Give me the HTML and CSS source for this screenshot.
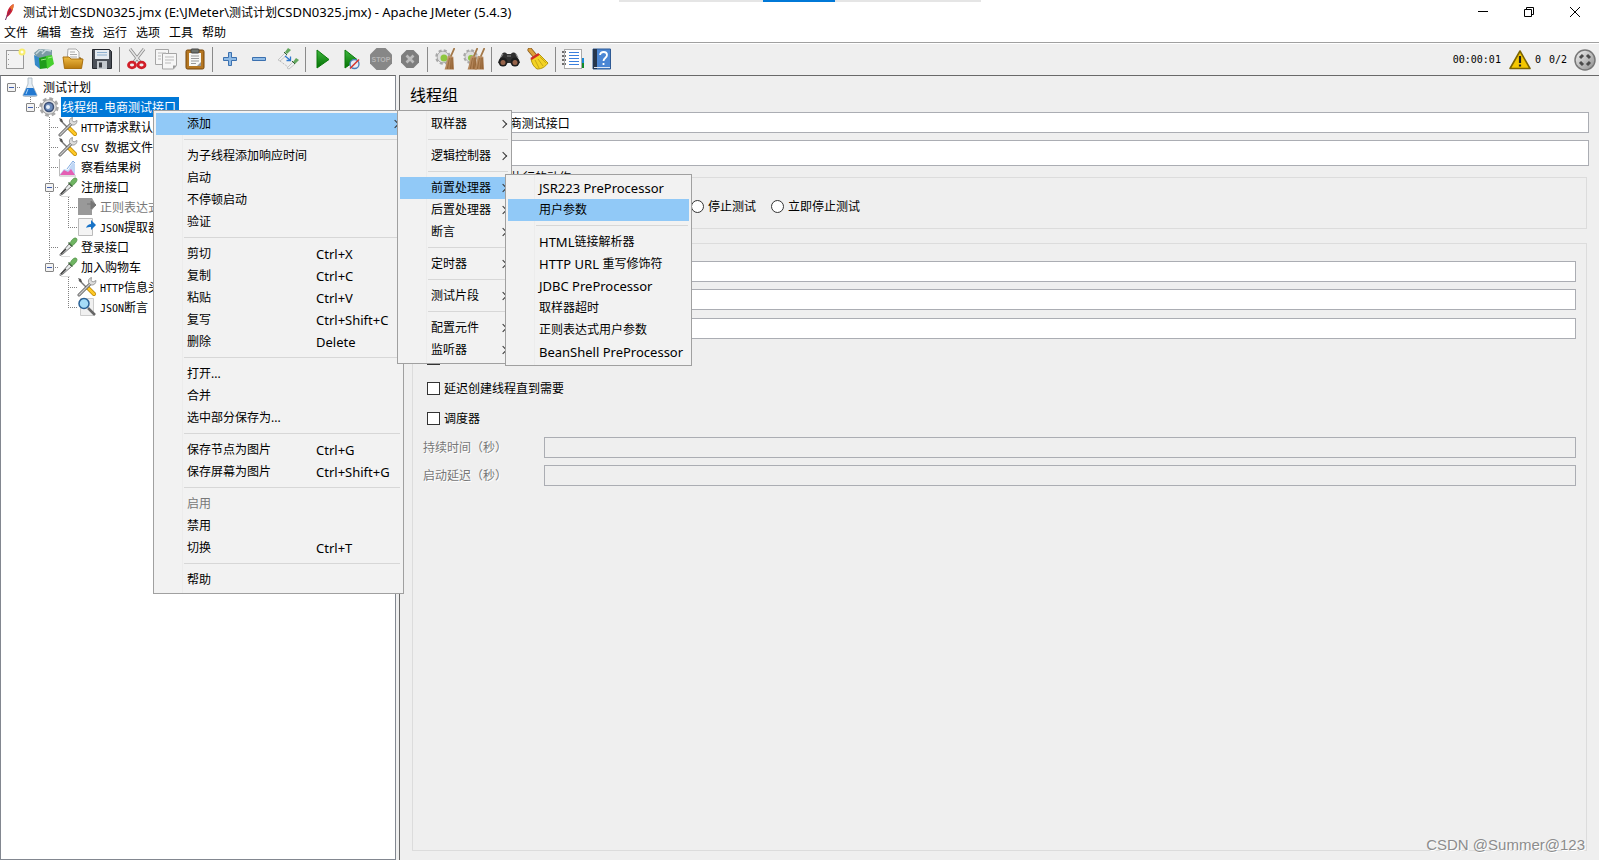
FILE: index.html
```html
<!DOCTYPE html>
<html lang="zh-CN">
<head>
<meta charset="utf-8">
<title>Apache JMeter (5.4.3)</title>
<link rel="stylesheet" href="styles.css">
</head>
<body>
<svg class="defs" aria-hidden="true">
  <defs>
    <linearGradient id="metal" x1="0" y1="0" x2="1" y2="1"><stop offset="0" stop-color="#f4f4f4"/><stop offset="1" stop-color="#8c8c8c"/></linearGradient>
    <linearGradient id="green" x1="0" y1="0" x2="0" y2="1"><stop offset="0" stop-color="#3fb83f"/><stop offset="1" stop-color="#037003"/></linearGradient>
    <linearGradient id="gold" x1="0" y1="0" x2="0" y2="1"><stop offset="0" stop-color="#f0bc45"/><stop offset="1" stop-color="#b97a0c"/></linearGradient>
    <linearGradient id="straw" x1="0" y1="0" x2="1" y2="1"><stop offset="0" stop-color="#c9a27a"/><stop offset="1" stop-color="#a06c3c"/></linearGradient>
    <symbol id="tools" viewBox="0 0 20 20">
      <path d="M2 3l8 8" stroke="#777" stroke-width="1.4"/><path d="M1 1l3 1 1 3-2 0z" fill="#555"/>
      <path d="M11 11l6 6" stroke="#b98500" stroke-width="4" stroke-linecap="round"/><path d="M11 11l6 6" stroke="#ffc928" stroke-width="2.6" stroke-linecap="round"/>
      <path d="M2 18L13 7" stroke="#555" stroke-width="3" stroke-linecap="round"/><path d="M2 18L13 7" stroke="#c9c9c9" stroke-width="1.5" stroke-linecap="round"/>
      <path d="M11.5 5.5c-.5-2 .5-4.500 3-5l-.5 3 2 1.500 3-1.500c0 3-2 5-5 4.500z" fill="#ddd" stroke="#888" stroke-width=".8"/>
    </symbol>
    <symbol id="dropper" viewBox="0 0 20 20">
      <path d="M2 17.500L11 7l2.500 2.500L5 17l-3 1.500z" fill="#e9ecec" stroke="#777" stroke-width="1"/>
      <path d="M3 17l5-5" stroke="#444" stroke-width="1.5"/>
      <path d="M10.500 5.500l4 4" stroke="#456b40" stroke-width="1.600"/>
      <path d="M12 6.500c1-3 3.500-6 6-5.500 2.500 1.500 0 5-3.500 7.500z" fill="#6fb562" stroke="#4c8b42" stroke-width=".7"/>
      <path d="M3 19.500h9" stroke="#ddd"/>
    </symbol>
    <symbol id="broom" viewBox="0 0 10 20">
      <path d="M9.500 0L6 8" stroke="#a37848" stroke-width="1.600"/>
      <path d="M3.500 7l5 1 .5 11.500H.5C2 16 2.500 11 3.500 7z" fill="url(#straw)"/><path d="M5 9l-2 10M6.500 9l-.5 10M7.500 9v10" stroke="#805022" stroke-width=".5"/>
    </symbol>
    <symbol id="gear" viewBox="0 0 20 20">
      <circle cx="10" cy="10" r="8" stroke="#a8a8a8" stroke-width="3.400" stroke-dasharray="3.600 2.680"/>
      <circle cx="10" cy="10" r="7.300" fill="#dedede" stroke="#a0a0a0"/>
    </symbol>
  </defs>
</svg>

<div class="window">
  <div class="capture-bar"><span></span></div>
  <header class="titlebar">
    <svg class="feather" viewBox="0 0 10 18"><path d="M1.500 17L4 10" stroke="#6a2a60"/><path d="M3 14C2 9 5 3 9.500 1 10 6 7 12 3 14z" fill="#c92136"/><path d="M6 4C7.500 2.500 8.500 1.500 9.500 1 10 3 9 6 8 8z" fill="#e9752d"/><path d="M3 13l4-7" stroke="#812163" stroke-width=".8"/></svg>
    <h1>测试计划<span class="latin">CSDN0325.jmx (E:\JMeter\</span>测试计划<span class="latin">CSDN0325.jmx) - Apache JMeter (5.4.3)</span></h1>
    <div class="controls">
      <button aria-label="最小化"><svg viewBox="0 0 12 12"><path d="M1 5.500h10" stroke="#000"/></svg></button>
      <button aria-label="还原"><svg viewBox="0 0 12 12" stroke="#000"><path d="M1.500 3.500h7v7h-7zM3.500 3V1.500h7v7H9"/></svg></button>
      <button aria-label="关闭"><svg viewBox="0 0 12 12"><path d="M1 1l10 10M11 1L1 11" stroke="#000"/></svg></button>
    </div>
  </header>

  <nav class="menubar">
    <button>文件</button><button>编辑</button><button>查找</button><button>运行</button><button>选项</button><button>工具</button><button>帮助</button>
  </nav>

  <div class="toolbar">
    <button aria-label="新建"><svg viewBox="0 0 22 22"><rect x="2.500" y="2.500" width="17" height="18" fill="#f3f3f3" stroke="#999"/><path d="M4.500 6v1M4.500 11v1M4.500 16v1" stroke="#999"/><circle cx="18" cy="4" r="3.500" fill="#f7ec6c"/><circle cx="18" cy="4" r="1.500" fill="#fffef0"/></svg></button>
    <button aria-label="模板"><svg viewBox="0 0 22 22"><path d="M1 5l5-4 13 1v6l-14 4z" fill="#7b9aa5"/><path d="M3 6l4-4 3 1M9 6l4-4 5 1" stroke="#c7d8de" stroke-width="1.500"/><path d="M1 7l6 3v11l-5-4z" fill="#3489c9"/><path d="M6 10l8-2 1 12-8 1z" fill="#1f9c1a"/><path d="M13 8l6-1 2 9-7 5z" fill="#46cf2e"/><path d="M8 12l5-1M15 10l4-1" stroke="#a0ee86"/></svg></button>
    <button aria-label="打开"><svg viewBox="0 0 22 22"><path d="M2 11l4-2h12l2 2v4H2z" fill="#8d6318"/><path d="M6 1h8l3 3v9H5z" fill="#fafafa" stroke="#aaa"/><path d="M8 4h5M8 6.500h7M8 9h7" stroke="#aaa"/><path d="M1 9h6l2 2h12l-1.500 9.500h-17z" fill="url(#gold)" stroke="#a87012"/></svg></button>
    <button aria-label="保存"><svg viewBox="0 0 22 22"><path d="M1.500 1.500h17l2 2v17h-19z" fill="#4b5058" stroke="#25282e"/><rect x="4" y="2" width="14" height="9" fill="#e5ebf1"/><path d="M6 4.500h10M6 7h10" stroke="#8eb0d0"/><rect x="6" y="13" width="10" height="8" fill="#c4c9ce"/><rect x="8" y="14.500" width="3" height="5" fill="#3a3e45"/></svg></button>
    <i></i>
    <button aria-label="剪切"><svg viewBox="0 0 22 22"><path d="M4 1l10 13M18 1L8 14" stroke="#888" stroke-width="3"/><path d="M4 1l10 13M18 1L8 14" stroke="#e4e4e4" stroke-width="1.600"/><ellipse cx="6" cy="17" rx="3.500" ry="2.800" stroke="#d11e28" stroke-width="2.800"/><ellipse cx="15.500" cy="17" rx="3.500" ry="2.800" stroke="#d11e28" stroke-width="2.800"/></svg></button>
    <button aria-label="复制"><svg viewBox="0 0 22 22"><g fill="#f6f6f6" stroke="#a5a5a5"><path d="M.5 1.500h13v15H.5z"/><path d="M7.500 5.500h14v12l-3 3.500h-11z"/></g><path d="M3 5h8M3 8h3M3 11h3M10 9h9M10 12h9M10 15h6" stroke="#bbb"/><path d="M18 21v-3.500h3.500z" fill="#999"/></svg></button>
    <button aria-label="粘贴"><svg viewBox="0 0 22 22"><rect x="2" y="2" width="18" height="19" rx="1.500" fill="#b57722" stroke="#754508"/><path d="M5 5h12v13H5z" fill="#f7f7f4"/><rect x="7" y="1" width="8" height="4" rx="1" fill="#6f736b" stroke="#444"/><path d="M7 8h8M7 10.500h8M7 13h8M7 15.500h5" stroke="#999"/><path d="M13 18h4v-4z" fill="#999"/></svg></button>
    <i></i>
    <button aria-label="展开"><svg viewBox="0 0 22 22"><path d="M9.500 4.500h3v5h5v3h-5v5h-3v-5h-5v-3h5z" fill="#8fbbe6" stroke="#3b70af"/></svg></button>
    <button aria-label="折叠"><svg viewBox="0 0 22 22"><path d="M4.500 9.500h13v3h-13z" fill="#8fbbe6" stroke="#3b70af"/></svg></button>
    <button aria-label="切换"><svg viewBox="0 0 22 22"><path d="M1 12l7-7 2 2-7 6zM10 20l6-6 2 2-6 5z" fill="#eef0f0" stroke="#bbb" stroke-width=".8"/><path d="M8 4l3-4 3 2-4 4zM16 14l3-4 3 2-4 4z" fill="#62a65d"/><path d="M7 4l3 3M15 13l3 3" stroke="#345e34"/><path d="M8 8l5 4M13.500 8.500V12.500H9.500" stroke="#2d78cf" stroke-width="1.300"/><path d="M3 13l8 6" stroke="#aaa" stroke-dasharray="1 1"/></svg></button>
    <i></i>
    <button aria-label="启动"><svg viewBox="0 0 22 22"><path d="M5 2l12 9.500L5 20z" fill="url(#green)" stroke="#0a7a0a"/></svg></button>
    <button aria-label="不停顿启动"><svg viewBox="0 0 22 22"><path d="M4 2l12 9.500L4 20z" fill="url(#green)" stroke="#0a7a0a"/><circle cx="13.500" cy="16" r="4.500" fill="#e8eef6" stroke="#4b7fb9" stroke-width="1.300"/><path d="M9 20.500l9-9" stroke="#d83830" stroke-width="1.600"/></svg></button>
    <button aria-label="停止" disabled><svg viewBox="0 0 22 22"><path d="M6.500 0h9L22 6.500v9L15.500 22h-9L0 15.500v-9z" fill="#878787"/><text x="11" y="14" text-anchor="middle" class="stop-text">STOP</text></svg></button>
    <button aria-label="关闭" disabled><svg viewBox="0 0 22 22"><path d="M7.500 2h7L20 7.500v7L14.500 20h-7L2 14.500v-7z" fill="#7e7e7e"/><path d="M7.500 7.500l7 7M14.500 7.500l-7 7" stroke="#bcbcbc" stroke-width="2.600"/></svg></button>
    <i></i>
    <button aria-label="清除"><svg viewBox="0 0 22 22"><use href="#gear" x="1" y="1" width="16" height="16"/><circle cx="10" cy="10" r="3.500" fill="#8ec63f"/><use href="#broom" x="10" y="0" width="11" height="22"/></svg></button>
    <button aria-label="清除全部"><svg viewBox="0 0 22 22"><use href="#gear" x="0" y="1" width="15" height="15"/><circle cx="8" cy="10" r="3" fill="#8ec63f"/><use href="#broom" x="4" y="0" width="11" height="22"/><use href="#broom" x="11" y="0" width="11" height="22"/></svg></button>
    <i></i>
    <button aria-label="查找"><svg viewBox="0 0 22 22"><path d="M4 6c1-2 4-2 5 0h4c1-2 4-2 5 0l4 9H0z" fill="#303030"/><path d="M3 9l2-3M18 6l2 4M9 8h4" stroke="#898989" stroke-width="1.200"/><circle cx="5" cy="14" r="4.500" fill="#1d1d1d"/><circle cx="17" cy="14" r="4.500" fill="#1d1d1d"/><circle cx="5" cy="14.500" r="2.500" fill="#97644b"/><circle cx="17" cy="14.500" r="2.500" fill="#97644b"/></svg></button>
    <button aria-label="重置查找"><svg viewBox="0 0 22 22"><path d="M3 2l5 6" stroke="#8b5c1b" stroke-width="5" stroke-linecap="round"/><path d="M3 2l5 6" stroke="#dc9f3c" stroke-width="3.400" stroke-linecap="round"/><path d="M4 11l8-5 9 9c-3 4-6 6-11 6-3-2-5-5-6-10z" fill="#f3d324" stroke="#b49710"/><path d="M8 12l4 8M11 11l5 7M13 9l6 6" stroke="#c8a616"/><path d="M4 11l8-5" stroke="#d12c24" stroke-width="2.500"/></svg></button>
    <i></i>
    <button aria-label="函数助手"><svg viewBox="0 0 22 22"><rect x="2.500" y="1.500" width="17" height="19" fill="#fff" stroke="#aaa"/><path d="M0 4h4M0 8h4M0 12h4M0 16h4" stroke="#444" stroke-width="1.500" stroke-dasharray="2 1"/><path d="M7 4.500h10M7 7.500h10M7 10.500h10M7 13.500h10M7 16.500h10" stroke="#3b80dd" stroke-width="1.200"/><path d="M20 10h2v5h-2z" fill="#1688d7"/><path d="M20 15h2v5h-2z" fill="#128a28"/></svg></button>
    <button aria-label="帮助"><svg viewBox="0 0 22 22"><path d="M2 1h17.500v20H2z" fill="#4b86d4" stroke="#2f5a94"/><path d="M2 1h4v20H2z" fill="#26364d"/><path d="M3 19.500h16" stroke="#dfe8f5"/><path d="M9 7c.5-4 7-4 7 0 0 3-3.500 3-3.500 6M12.500 15v2" stroke="#fff" stroke-width="1.800"/></svg></button>
    <div class="status">
      <span class="mono">00:00:01</span>
      <svg class="warn" viewBox="0 0 22 20"><path d="M11 1L21 18.500H1z" fill="#f5c800" stroke="#7d6500" stroke-width="1.600" stroke-linejoin="round"/><path d="M11 6v7M11 14.500v2" stroke="#222" stroke-width="2.200"/></svg>
      <span class="mono">0</span>
      <span class="mono threads">0/2</span>
      <svg class="ring" viewBox="0 0 22 22"><circle cx="11" cy="11" r="10" fill="url(#metal)" stroke="#777" stroke-width="1.500"/><path d="M6 9l3-3M13 6l3 3M6 13l3 3M13 16l3-3" stroke="#4a4a4a" stroke-width="3"/></svg>
    </div>
  </div>

  <div class="body">
    <aside class="tree">
      <div class="row"><button class="cell stub" aria-label="折叠"><b></b></button><svg viewBox="0 0 20 20"><path d="M8 1h4v6l5 11c0 1-.5 1.500-1.500 1.500h-11C3.500 19.500 3 19 3 18L8 7z" fill="#e5edf4" stroke="#a5b2bd" stroke-width=".8"/><path d="M6.500 11h7l3.500 7.500H3z" fill="#2278d0"/><path d="M8 12l-2 5" stroke="#a5d2fa"/></svg><span>测试计划</span></div>
      <div class="row"><em class="cell"></em><button class="cell end" aria-label="折叠"><b></b></button><svg viewBox="0 0 20 20"><use href="#gear" width="20" height="20"/><circle cx="10" cy="10" r="4.500" fill="#6c8dbd" stroke="#3c4f75" stroke-width="1.500"/><circle cx="9" cy="10" r="2" fill="#e7effa"/></svg><span class="selected">线程组<tt>-</tt>电商测试接口</span></div>
      <div class="row"><em class="cell"></em><em class="cell"></em><em class="cell tee"></em><svg><use href="#tools"/></svg><span><tt>HTTP</tt>请求默认值</span></div>
      <div class="row"><em class="cell"></em><em class="cell"></em><em class="cell tee"></em><svg><use href="#tools"/></svg><span><tt>CSV </tt>数据文件设置</span></div>
      <div class="row"><em class="cell"></em><em class="cell"></em><em class="cell tee"></em><svg viewBox="0 0 20 20"><path d="M1.500 2v17H18" stroke="#bbb"/><path d="M2 17l4-5 4 1 5-8 2 2v11H2z" fill="#bfd6f5"/><path d="M2 18l4-5 4 2 3-3 4 6z" fill="#e45fb4"/><path d="M9 12l6-8 2 2" stroke="#7fa9e0"/></svg><span>察看结果树</span></div>
      <div class="row"><em class="cell"></em><em class="cell"></em><button class="cell tee" aria-label="折叠"><b></b></button><svg><use href="#dropper"/></svg><span>注册接口</span></div>
      <div class="row"><em class="cell"></em><em class="cell"></em><em class="cell line"></em><em class="cell tee"></em><svg viewBox="0 0 20 20"><path d="M1 1h14l4 7-4 5v5H1z" fill="#999"/><path d="M10 7h5M14 4l5 4-5 4z" stroke="#777" fill="#777"/></svg><span class="off">正则表达式提取器</span></div>
      <div class="row"><em class="cell"></em><em class="cell"></em><em class="cell line"></em><em class="cell end"></em><svg viewBox="0 0 20 20"><path d="M1.500 1.500h14v17h-14z" fill="#f4f4f4" stroke="#bbb"/><path d="M9 11c1-3 3-4 5-4V3l5 5-5 5v-3c-2 0-4 0-5 1z" fill="#1973c7"/></svg><span><tt>JSON</tt>提取器</span></div>
      <div class="row"><em class="cell"></em><em class="cell"></em><em class="cell tee"></em><svg><use href="#dropper"/></svg><span>登录接口</span></div>
      <div class="row"><em class="cell"></em><em class="cell"></em><button class="cell end" aria-label="折叠"><b></b></button><svg><use href="#dropper"/></svg><span>加入购物车</span></div>
      <div class="row"><em class="cell"></em><em class="cell"></em><em class="cell"></em><em class="cell tee"></em><svg><use href="#tools"/></svg><span><tt>HTTP</tt>信息头管理器</span></div>
      <div class="row"><em class="cell"></em><em class="cell"></em><em class="cell"></em><em class="cell end"></em><svg viewBox="0 0 20 20"><path d="M3.500 1.500h13v17h-13z" fill="#f0f0f0" stroke="#ccc"/><path d="M11 11l7 7" stroke="#666" stroke-width="2.500"/><circle cx="7" cy="6.500" r="5" fill="#a5dcf8" stroke="#2a6196" stroke-width="1.500"/></svg><span><tt>JSON</tt>断言</span></div>
    </aside>

    <main class="panel">
      <h2>线程组</h2>
      <div class="field"><label for="name">名称：</label><input id="name" value="线程组-电商测试接口"></div>
      <div class="field tall"><label for="note">注释：</label><input id="note"></div>
      <fieldset class="action">
        <legend>在取样器错误后要执行的动作</legend>
        <label><input type="radio" name="act" checked>继续</label>
        <label><input type="radio" name="act">启动下一进程循环</label>
        <label><input type="radio" name="act">停止线程</label>
        <label><input type="radio" name="act">停止测试</label>
        <label><input type="radio" name="act">立即停止测试</label>
      </fieldset>
      <fieldset class="props">
        <legend>线程属性</legend>
        <div class="field"><label for="threads">线程数：</label><input id="threads"></div>
        <div class="field"><label for="ramp">准备时长（秒）：</label><input id="ramp"></div>
        <div class="field loop"><label for="loops">循环次数</label><input id="loops"></div>
        <div class="checks">
          <input type="checkbox" aria-label="Same user on each iteration">
          <label><input type="checkbox">延迟创建线程直到需要</label>
          <label><input type="checkbox">调度器</label>
        </div>
        <div class="field off"><label for="dur">持续时间（秒）</label><input id="dur" disabled></div>
        <div class="field off"><label for="delay">启动延迟（秒）</label><input id="delay" disabled></div>
      </fieldset>
      <div class="watermark">CSDN @Summer@123</div>
    </main>
  </div>

  <div class="menu context">
    <button class="on more">添加</button><hr>
    <button>为子线程添加响应时间</button><button>启动</button><button>不停顿启动</button><button>验证</button><hr>
    <button>剪切<kbd>Ctrl+X</kbd></button><button>复制<kbd>Ctrl+C</kbd></button><button>粘贴<kbd>Ctrl+V</kbd></button><button>复写<kbd>Ctrl+Shift+C</kbd></button><button>删除<kbd>Delete</kbd></button><hr>
    <button>打开...</button><button>合并</button><button>选中部分保存为...</button><hr>
    <button>保存节点为图片<kbd>Ctrl+G</kbd></button><button>保存屏幕为图片<kbd>Ctrl+Shift+G</kbd></button><hr>
    <button disabled>启用</button><button>禁用</button><button>切换<kbd>Ctrl+T</kbd></button><hr>
    <button>帮助</button>
  </div>
  <div class="menu add">
    <button class="more">取样器</button><hr>
    <button class="more">逻辑控制器</button><hr>
    <button class="on more">前置处理器</button><button class="more">后置处理器</button><button class="more">断言</button><hr>
    <button class="more">定时器</button><hr>
    <button class="more">测试片段</button><hr>
    <button class="more">配置元件</button><button class="more">监听器</button>
  </div>
  <div class="menu pre">
    <button class="latin">JSR223 PreProcessor</button><button class="on">用户参数</button><hr>
    <button><span class="latin">HTML</span>链接解析器</button><button><span class="latin">HTTP URL&nbsp;</span>重写修饰符</button><button class="latin">JDBC PreProcessor</button><button>取样器超时</button><button>正则表达式用户参数</button><button class="latin">BeanShell PreProcessor</button>
  </div>
</div>
</body>
</html>
```

FILE: styles.css
```css
* { box-sizing: border-box; }
body {
  margin: 0;
  background: #fff;
  color: #000;
  font: 12px/16px "Noto Sans", "Noto Sans CJK SC", sans-serif;
}
button, input {
  font: inherit;
  color: inherit;
  margin: 0;
  padding: 0;
}
button { border: 0; background: none; white-space: nowrap; }
svg { display: block; flex: none; fill: none; }
.latin, .menu kbd { font-size: 13px; }
.defs { position: absolute; width: 0; height: 0; }

.window {
  position: relative;
  display: flex;
  flex-direction: column;
  height: 100vh;
  overflow: hidden;
}

/* strip hanging from the top edge of the screen */
.capture-bar {
  position: absolute;
  top: 0;
  left: 50%;
  width: 362px;
  height: 2px;
  margin-left: -181px;
  background: #e5e5e5;
}
.capture-bar span { display: block; width: 72px; height: 2px; margin-left: 144px; background: #0078d7; }

/* title bar */
.titlebar { display: flex; align-items: center; height: 24px; padding: 0 1px 0 4px; }
.feather { width: 10px; height: 18px; margin-right: 9px; }
.titlebar h1 { flex: 1; margin: 0; font-size: 12px; font-weight: 400; white-space: nowrap; }
.controls { display: flex; }
.controls button { width: 46px; height: 22px; display: grid; place-items: center; }
.controls svg { width: 12px; height: 12px; }

/* menu bar */
.menubar {
  display: flex;
  gap: 9px;
  height: 20px;
  padding: 0 4px 1px;
  box-shadow: inset 0 -1px #fff, inset 0 -2px #a0a0a0;
}
.menubar button { height: 17px; line-height: 16px; }

/* tool bar */
.toolbar { display: flex; align-items: center; height: 31px; padding: 0 3px 0 1px; background: #efefef; }
.toolbar button { width: 29px; height: 28px; padding: 0 2px 2px 0; display: grid; place-items: center; }
.toolbar button svg { width: 22px; height: 22px; }
.toolbar i { width: 1px; height: 25px; margin: 0 3px 0 2px; background: #8a8a8a; }
.stop-text { font: 700 7px "Liberation Sans", sans-serif; fill: #b5b5b5; }
.status { display: flex; align-items: center; margin-left: auto; }
.mono, tt { font-family: "DejaVu Sans Mono", monospace; font-size: 10px; }
.warn { width: 22px; height: 20px; margin: 0 4px 0 8px; }
.threads { margin: 0 7px 0 8px; }
.ring { width: 22px; height: 22px; }

/* test plan tree */
.body { flex: 1; display: flex; gap: 3px; min-height: 0; background: #efefef; }
.tree {
  flex: 0 0 396px;
  padding: 1px 0 0;
  overflow: hidden;
  background: #fff;
  border: 1px solid #828790;
  border-top-color: #696969;
}
.row { display: flex; align-items: center; height: 20px; }
.row svg { width: 20px; height: 20px; margin-right: 2px; }
.row span { height: 20px; padding: 1px 3px 0 1px; line-height: 20px; white-space: nowrap; }
.row .selected { background: #0078d7; color: #fff; }
.row .off { color: #777; }
tt { white-space: pre; }
.cell {
  --dots-v: repeating-linear-gradient(#808080 0 1px, transparent 1px 2px);
  --dots-h: repeating-linear-gradient(90deg, #808080 0 1px, transparent 1px 2px);
  flex: none;
  display: block;
  width: 19px;
  height: 20px;
  background-repeat: no-repeat;
}
.cell:first-child { width: 20px; }
.cell:first-child b { margin-left: 6px; }
.stub { background-image: var(--dots-h); background-position: 10px 10px; background-size: 10px 1px; }
.line { background-image: var(--dots-v); background-position: 9px 0; background-size: 1px 20px; }
.tee, .end { background-image: var(--dots-v), var(--dots-h); background-position: 9px 0, 9px 10px; }
.tee { background-size: 1px 20px, 10px 1px; }
.end { background-size: 1px 11px, 10px 1px; }
.cell b {
  display: block;
  width: 9px;
  height: 9px;
  margin: 1px 0 0 5px;
  border: 1px solid #848484;
  border-radius: 1px;
  background: linear-gradient(#4160b0, #4160b0) center / 5px 1px no-repeat, #f3f3f3;
}
.cell + svg { margin-left: -1px; }

/* thread group form */
.panel {
  position: relative;
  flex: 1;
  display: flex;
  flex-direction: column;
  min-width: 0;
  padding: 9px 10px;
  border: solid #696969;
  border-width: 1px 0 0 1px;
}
.panel h2 { margin: 0 0 7px; font-size: 16px; line-height: 20px; font-weight: 400; }
.field { display: flex; align-items: center; margin-bottom: 7px; }
.field label { flex: none; width: 43px; }
.field input {
  flex: 1;
  min-width: 0;
  height: 21px;
  padding: 0 4px;
  background: #fff;
  border: 1px solid #abadb3;
}
.tall { margin-bottom: 2px; }
.tall input { height: 26px; }
fieldset { min-width: 0; margin: 0 2px; border: 1px solid #dcdcdc; }
legend { padding: 2px 2px 0; line-height: 16px; }
.action { display: flex; gap: 15px; margin-bottom: 5px; padding: 12px 14px 13px; }
.action legend { margin-left: -14px; }
.action label, .checks label { display: flex; align-items: center; gap: 4px; height: 17px; white-space: nowrap; }
input[type="radio"], input[type="checkbox"] {
  appearance: none;
  flex: none;
  width: 13px;
  height: 13px;
  border: 1px solid #333;
  background: #fff;
}
input[type="radio"] { border-radius: 50%; }
.props { flex: 1; padding: 9px 10px; }
.props legend { margin-left: -8px; }
.props .field label { width: 121px; }
.props .loop { height: 23px; margin-bottom: 10px; }
.checks { display: flex; flex-direction: column; gap: 13px; margin-bottom: 10px; padding-left: 4px; }
.checks > input { margin: 2px 0; }
.field.off { color: #777; text-shadow: 1px 1px #fff; }
.field.off input { background: #efefef; }
.watermark {
  position: absolute;
  right: 14px;
  bottom: 5px;
  color: #8c8c8c;
  font: 15px/20px "Liberation Sans", sans-serif;
  text-shadow: 1px 1px #fff;
}

/* pop-up menus */
.menu {
  position: absolute;
  display: flex;
  flex-direction: column;
  padding: 2px;
  background: linear-gradient(#ececec, #ececec) 28px 0 / 1px 100% no-repeat, #f2f2f2;
  border: 1px solid #a0a0a0;
}
.menu button { display: flex; align-items: center; height: 22px; padding-left: 31px; text-align: left; }
.menu button:disabled { color: #777; }
.menu .on { background: #91c9f7; }
.menu hr { width: calc(100% - 29px); height: 1px; margin: 4px 1px 5px 28px; border: 0; background: #d7d7d7; }
.menu kbd { width: 85px; margin-left: auto; font-family: inherit; }
.more::after {
  content: "";
  width: 5px;
  height: 5px;
  margin: 0 3px 0 auto;
  border: solid #333;
  border-width: 1px 1px 0 0;
  transform: rotate(45deg);
}
.context { left: 153px; top: 110px; width: 251px; }
.add { left: 397px; top: 110px; width: 115px; }
.pre { left: 505px; top: 174px; width: 187px; }
```
